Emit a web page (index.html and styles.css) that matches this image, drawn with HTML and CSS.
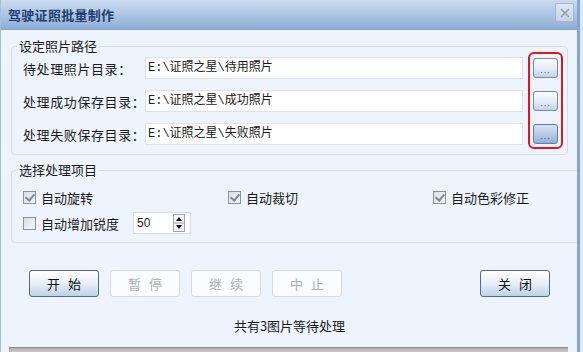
FILE: index.html
```html
<!DOCTYPE html>
<html lang="zh-CN">
<head>
  <meta charset="UTF-8" />
  <title>驾驶证照批量制作</title>
  <link rel="stylesheet" href="styles.css">
</head>
<body>
  <div class="window">
    <div class="titlebar">
      <span class="title">驾驶证照批量制作</span>
      <span class="close" aria-label="关闭">
        <svg width="12" height="12" viewBox="0 0 12 12"><path d="M2 2 L10 10 M10 2 L2 10" stroke="#8a97a8" stroke-width="1.3" fill="none"/></svg>
      </span>
    </div>

    <div class="content">
      <!-- 路径设置 -->
      <fieldset class="group">
        <legend>设定照片路径</legend>
        <div class="paths">
          <span class="label">待处理照片目录：</span>
          <div class="path-input">E:\证照之星\待用照片</div>
          <span class="browse">...</span>

          <span class="label">处理成功保存目录：</span>
          <div class="path-input">E:\证照之星\成功照片</div>
          <span class="browse">...</span>

          <span class="label">处理失败保存目录：</span>
          <div class="path-input">E:\证照之星\失败照片</div>
          <span class="browse focused">...</span>

          <div class="highlight"></div>
        </div>
      </fieldset>

      <!-- 处理项目 -->
      <fieldset class="group group-options">
        <legend>选择处理项目</legend>
        <div class="options">
          <label class="check"><span class="box checked"></span>自动旋转</label>
          <label class="check"><span class="box checked"></span>自动裁切</label>
          <label class="check"><span class="box checked"></span>自动色彩修正</label>
          <div class="sharpen">
            <label class="check"><span class="box"></span>自动增加锐度</label>
            <div class="spin">
              <span class="spin-value">50</span>
              <span class="spin-btns">
                <svg width="12" height="18" viewBox="0 0 12 18">
                  <rect x="0.5" y="0.5" width="11" height="17" fill="#f4f6f9" stroke="#9aa5b5"/>
                  <line x1="1" y1="9" x2="11" y2="9" stroke="#9aa5b5"/>
                  <path d="M3 7 L9 7 L6 3 Z" fill="#111"/>
                  <path d="M3 11 L9 11 L6 15 Z" fill="#111"/>
                </svg>
              </span>
            </div>
          </div>
        </div>
      </fieldset>

      <div class="actions">
        <span class="btn">开 始</span>
        <span class="btn disabled">暂 停</span>
        <span class="btn disabled">继 续</span>
        <span class="btn disabled">中 止</span>
        <span class="btn btn-close">关 闭</span>
      </div>

      <div class="status">共有3图片等待处理</div>
      <div class="progress"></div>
    </div>
  </div>
</body>
</html>
```

FILE: styles.css
```css
*{box-sizing:border-box;}
body {
  margin:0;
  background:#dde8f6;
  font-family:"Noto Sans CJK SC","Liberation Sans",sans-serif;
  font-size:13px;
  color:#1b1b1b;
}
.window {
  width:580px;
  height:352px;
  background:#edf4fd;
  border-left:1px solid #a7bddd;
  border-right:3px solid #86a5d2;
  overflow:hidden;
}
.titlebar {
  height:30px;
  display:flex;
  align-items:center;
  justify-content:space-between;
  padding:0 3px 0 7px;
  background:linear-gradient(#cbdbf0 0%,#aec5e5 50%,#8eacd6 100%);
  border-bottom:1px solid #88a3cb;
}
.title {
  font-weight:700;
  font-size:13px;
  color:#22406f;
  letter-spacing:0.3px;
}
.close {
  width:19px;
  height:19px;
  margin-top:-4px;
  display:flex;
  align-items:center;
  justify-content:center;
  border:1px solid #a4b6d0;
  border-radius:2px;
  background:linear-gradient(#dfe8f4,#c3d3e8);
}
.content {
  padding:0 9px 0 10px;
}
.group {
  margin:8px 0 0;
  padding:3px 9px 9px 5px;
  border:1px solid #d2dded;
  border-radius:4px;
}
.group legend {
  padding:0 2px;
  line-height:16px;
  font-size:13px;
}
.paths {
  position:relative;
  margin-left:6px;
  display:grid;
  grid-template-columns:122px 378px 35px;
  grid-auto-rows:22px;
  row-gap:11px;
  align-items:center;
}
.label {white-space:nowrap; letter-spacing:0.6px;}
.path-input {
  height:22px;
  background:#fff;
  border:1px solid #dbe3ee;
  padding:0 2px;
  line-height:20px;
  font-family:"Liberation Mono","Noto Sans CJK SC",monospace;
  font-size:12px;
  white-space:nowrap;
}
.browse {
  margin-left:10px;
  width:25px;
  height:20px;
  border:1px solid #6f8bb6;
  border-radius:3px;
  background:linear-gradient(#fbfdff 0%,#e3ebf6 55%,#c2d2e8 100%);
  font-family:"Liberation Sans",sans-serif;
  font-size:9px;
  line-height:22px;
  text-align:center;
  letter-spacing:1px;
  color:#4d5a6c;
}
.browse.focused {
  background:linear-gradient(#d7e2f1 0%,#b5c8e3 55%,#94aed3 100%);
  border-color:#5f7eae;
}
.highlight {
  position:absolute;
  left:505px;
  top:-5px;
  width:35px;
  height:97px;
  border:2px solid #e2161d;
  border-radius:6px;
}
.group-options {margin-top:7px; padding-top:8px; padding-bottom:8px;}
.options {
  margin-left:6px;
  display:grid;
  grid-template-columns:205px 205px 140px;
  grid-auto-rows:22px;
  row-gap:4px;
  align-items:center;
}
.check {
  display:flex;
  align-items:center;
  gap:5px;
  white-space:nowrap;
}
.box {
  width:13px;
  height:13px;
  border:1px solid #8793a7;
  background:linear-gradient(135deg,#d9dde4,#f7f8fa);
  position:relative;
}
.box.checked::after {
  content:"";
  position:absolute;
  left:3px;
  top:0px;
  width:4px;
  height:7px;
  border:solid #7f899a;
  border-width:0 2px 2px 0;
  transform:rotate(40deg);
}
.sharpen {
  grid-column:1 / 4;
  display:flex;
  align-items:center;
}
.spin {
  margin-left:14px;
  width:58px;
  height:22px;
  background:#fff;
  border:1px solid #d4dce7;
  display:flex;
  align-items:center;
  justify-content:space-between;
  padding:0 5px 0 3px;
}
.spin-value {font-family:"Liberation Sans",sans-serif; font-size:12px;}
.spin-btns {display:flex;}
.actions {
  margin:27px 18px 0 18px;
  display:flex;
  gap:11px;
}
.btn {
  width:70px;
  height:27px;
  border:1px solid #4f6c98;
  border-radius:3px;
  background:linear-gradient(#ffffff 0%,#e8eef7 50%,#bfd0e7 100%);
  text-align:center;
  line-height:25px;
  font-size:13px;
  word-spacing:5px;
  color:#111;
}
.btn.disabled {
  border-color:#d3dae4;
  background:#fbfcfe;
  color:#a9afb8;
}
.btn-close {margin-left:auto;}
.status {
  margin-top:21px;
  text-align:center;
  line-height:16px;
  font-size:13px;
}
.progress {
  margin-top:13px;
  height:8px;
  border-top:1px solid #8a8a8a;
  border-left:1px solid #9a9a9a;
  background:linear-gradient(#b0b0b0,#dcdcdc);
  margin-left:-2px;
}
```
